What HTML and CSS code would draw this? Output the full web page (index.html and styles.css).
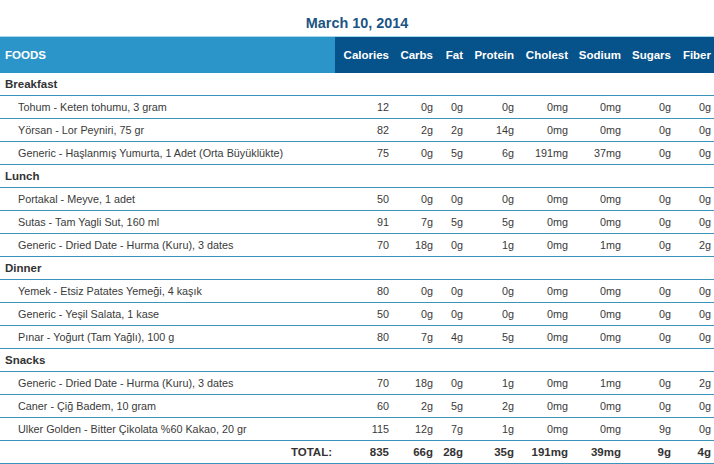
FILE: index.html
```html
<!DOCTYPE html>
<html>
<head>
<meta charset="utf-8">
<link rel="stylesheet" href="styles.css">
</head>
<body>
<h1 class="title">March 10, 2014</h1>
<table class="diary">
  <colgroup>
    <col class="c-food"><col class="c-cal"><col class="c-carb"><col class="c-fat"><col class="c-prot"><col class="c-chol"><col class="c-sod"><col class="c-sug"><col class="c-fib">
  </colgroup>
  <thead>
    <tr>
      <th class="foods">FOODS</th>
      <th>Calories</th><th>Carbs</th><th>Fat</th><th>Protein</th><th>Cholest</th><th>Sodium</th><th>Sugars</th><th>Fiber</th>
    </tr>
  </thead>
  <tbody>
    <tr class="meal"><td>Breakfast</td><td></td><td></td><td></td><td></td><td></td><td></td><td></td><td></td></tr>
    <tr class="item"><td>Tohum - Keten tohumu, 3 gram</td><td>12</td><td>0g</td><td>0g</td><td>0g</td><td>0mg</td><td>0mg</td><td>0g</td><td>0g</td></tr>
    <tr class="item"><td>Yörsan - Lor Peyniri, 75 gr</td><td>82</td><td>2g</td><td>2g</td><td>14g</td><td>0mg</td><td>0mg</td><td>0g</td><td>0g</td></tr>
    <tr class="item"><td>Generic - Haşlanmış Yumurta, 1 Adet (Orta Büyüklükte)</td><td>75</td><td>0g</td><td>5g</td><td>6g</td><td>191mg</td><td>37mg</td><td>0g</td><td>0g</td></tr>
    <tr class="meal"><td>Lunch</td><td></td><td></td><td></td><td></td><td></td><td></td><td></td><td></td></tr>
    <tr class="item"><td>Portakal - Meyve, 1 adet</td><td>50</td><td>0g</td><td>0g</td><td>0g</td><td>0mg</td><td>0mg</td><td>0g</td><td>0g</td></tr>
    <tr class="item"><td>Sutas - Tam Yagli Sut, 160 ml</td><td>91</td><td>7g</td><td>5g</td><td>5g</td><td>0mg</td><td>0mg</td><td>0g</td><td>0g</td></tr>
    <tr class="item"><td>Generic - Dried Date - Hurma (Kuru), 3 dates</td><td>70</td><td>18g</td><td>0g</td><td>1g</td><td>0mg</td><td>1mg</td><td>0g</td><td>2g</td></tr>
    <tr class="meal"><td>Dinner</td><td></td><td></td><td></td><td></td><td></td><td></td><td></td><td></td></tr>
    <tr class="item"><td>Yemek - Etsiz Patates Yemeği, 4 kaşık</td><td>80</td><td>0g</td><td>0g</td><td>0g</td><td>0mg</td><td>0mg</td><td>0g</td><td>0g</td></tr>
    <tr class="item"><td>Generic - Yeşil Salata, 1 kase</td><td>50</td><td>0g</td><td>0g</td><td>0g</td><td>0mg</td><td>0mg</td><td>0g</td><td>0g</td></tr>
    <tr class="item"><td>Pınar - Yoğurt (Tam Yağlı), 100 g</td><td>80</td><td>7g</td><td>4g</td><td>5g</td><td>0mg</td><td>0mg</td><td>0g</td><td>0g</td></tr>
    <tr class="meal"><td>Snacks</td><td></td><td></td><td></td><td></td><td></td><td></td><td></td><td></td></tr>
    <tr class="item"><td>Generic - Dried Date - Hurma (Kuru), 3 dates</td><td>70</td><td>18g</td><td>0g</td><td>1g</td><td>0mg</td><td>1mg</td><td>0g</td><td>2g</td></tr>
    <tr class="item"><td>Caner - Çiğ Badem, 10 gram</td><td>60</td><td>2g</td><td>5g</td><td>2g</td><td>0mg</td><td>0mg</td><td>0g</td><td>0g</td></tr>
    <tr class="item"><td>Ulker Golden - Bitter Çikolata %60 Kakao, 20 gr</td><td>115</td><td>12g</td><td>7g</td><td>1g</td><td>0mg</td><td>0mg</td><td>9g</td><td>0g</td></tr>
    <tr class="total"><td>TOTAL:</td><td>835</td><td>66g</td><td>28g</td><td>35g</td><td>191mg</td><td>39mg</td><td>9g</td><td>4g</td></tr>
  </tbody>
</table>
</body>
</html>
```
FILE: styles.css
```css
html, body {
  margin: 0;
  padding: 0;
  background: #ffffff;
}
body {
  font-family: "Liberation Sans", Arial, sans-serif;
  color: #333333;
  width: 714px;
  overflow: hidden;
}
.title {
  margin: 0;
  height: 16px;
  padding: 15px 0 5px;
  font-size: 14.4px;
  line-height: 16px;
  font-weight: bold;
  color: #1c5484;
  text-align: center;
}
.diary {
  width: 714px;
  table-layout: fixed;
  border-collapse: separate;
  border-spacing: 0;
}
.c-food { width: 335px; }
.c-cal { width: 59px; }
.c-carb { width: 44px; }
.c-fat { width: 30px; }
.c-prot { width: 51px; }
.c-chol { width: 54px; }
.c-sod { width: 53px; }
.c-sug { width: 50px; }
.c-fib { width: 38px; }

.diary th {
  height: 36px;
  padding: 0 5px 0 0;
  border-top: 1px solid #a3d8ef;
  background: #06528a;
  color: #ffffff;
  font-size: 11.5px;
  font-weight: bold;
  text-align: right;
  white-space: nowrap;
}
.diary th.foods {
  background: #2b95c9;
  text-align: left;
  padding-left: 5px;
}
.diary th:last-child,
.diary td:last-child {
  padding-right: 3px;
}
.diary td {
  height: 22px;
  padding: 0 5px 0 0;
  border-bottom: 1px solid #3b95bb;
  font-size: 10.8px;
  color: #3a3a3a;
  text-align: right;
  white-space: nowrap;
  overflow: hidden;
}
.diary td:first-child {
  text-align: left;
}
.meal td:first-child {
  padding-left: 5px;
  font-weight: bold;
  font-size: 11.5px;
  color: #333333;
}
.item td:first-child {
  padding-left: 18px;
}
.total td {
  font-weight: bold;
  font-size: 11.5px;
  color: #333333;
}
.total td:first-child {
  text-align: right;
  padding-right: 3px;
}
```
